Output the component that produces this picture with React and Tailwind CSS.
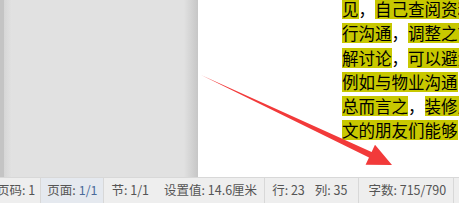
import React from "react";

const lines = [
  [["见", true], ["，", false], ["自己查阅资料", true]],
  [["行沟通", true], ["，", false], ["调整之前", true]],
  [["解讨论", true], ["，", false], ["可以避免", true]],
  [["例如与物业沟通", true]],
  [["总而言之", true], ["，", false], ["装修之", true]],
  [["文的朋友们能够", true]],
];

function Seg({ children, className = "" }) {
  return (
    <div className={`flex items-center h-full text-[12.5px] text-[#555] whitespace-nowrap ${className}`}>
      {children}
    </div>
  );
}

export default function App() {
  return (
    <div
      className="relative w-[459px] h-[203px] overflow-hidden bg-white flex flex-col"
      style={{ fontFamily: '"Noto Sans CJK SC", "Noto Sans", sans-serif' }}
    >
      <div className="flex flex-1 min-h-0">
        {/* grey workspace */}
        <div className="w-[198px] h-full flex">
          <div className="w-[4px] h-full bg-[#c4c4c4]" />
          <div className="w-[8px] h-full bg-gradient-to-r from-[#d6d6d6] to-[#e2e2e2]" />
          <div className="flex-1 h-full bg-[#e1e1e1]" />
          <div className="w-[14px] h-full bg-gradient-to-r from-[#e1e1e1] to-[#c6c6c6]" />
        </div>
        {/* page */}
        <div className="flex-1 h-full bg-white overflow-hidden">
          <div className="ml-[144px] mt-[-1px] flex flex-col">
            {lines.map((line, i) => (
              <div
                key={i}
                className="h-[24.3px] flex items-start whitespace-nowrap text-[16.5px] leading-[20px] text-black"
              >
                {line.map(([t, hl], j) => (
                  <span key={j} className={`h-[20px] ${hl ? "bg-[#c8c800]" : "bg-white"}`}>
                    {t}
                  </span>
                ))}
              </div>
            ))}
          </div>
        </div>
      </div>
      {/* status bar */}
      <div className="h-[26px] shrink-0 bg-[#eeeeee] border-t border-[#d8d8d8] flex items-center">
        <Seg className="ml-[-3px] pr-[5px] border-r border-[#d8d8d8]">页码: 1</Seg>
        <Seg className="px-[6px] bg-[#e5e9ef] border-r border-[#d8d8d8]">
          页面: <span className="ml-[3px] text-[#4a6a9a]">1/1</span>
        </Seg>
        <Seg className="pl-[7px] pr-[8px]">节: 1/1</Seg>
        <Seg className="pl-[7px] pr-[7px] border-r border-[#d8d8d8]">设置值: 14.6厘米</Seg>
        <Seg className="pl-[7px] pr-[5px]">行: 23</Seg>
        <Seg className="pl-[5px] pr-[11px] border-r border-[#d8d8d8]">列: 35</Seg>
        <Seg className="pl-[9px] pr-[7px] border-r border-[#d8d8d8]">字数: 715/790</Seg>
      </div>
      {/* red arrow */}
      <svg className="absolute left-0 top-0 pointer-events-none" width="459" height="203">
        <polygon
          points="201,75 371.6,152.1 375,144.8 392,165 365.6,164.8 369,157.5"
          fill="#f23a3a"
        />
      </svg>
    </div>
  );
}
